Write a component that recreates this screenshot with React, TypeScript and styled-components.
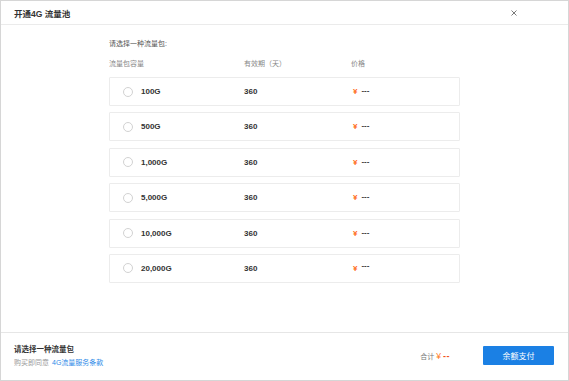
import React from "react";
import styled, { createGlobalStyle } from "styled-components";

const GlobalStyle = createGlobalStyle`
    html, body {
        margin: 0;
        padding: 0;
        background: #ffffff;
    }
    * {
        box-sizing: border-box;
    }
    body {
        font-family: "Liberation Sans", "Noto Sans CJK SC", sans-serif;
        color: #333;
    }
`;

const Dialog = styled.div`
    width: 569px;
    height: 381px;
    border: 1px solid #d6d6d6;
    display: flex;
    flex-direction: column;
    background: #fff;
`;
const Header = styled.div`
    height: 24px;
    flex-shrink: 0;
    display: flex;
    align-items: center;
    justify-content: space-between;
    padding: 0 50px 0 13px;
    border-bottom: 1px solid #ebebeb;
`;
const Title = styled.h1`
    margin: 0;
    font-size: 8.5px;
    font-weight: 700;
    color: #333;
`;
const CloseBtn = styled.button`
    width: 8px;
    height: 8px;
    padding: 0;
    border: none;
    background: transparent;
    display: flex;
    align-items: center;
    justify-content: center;
    cursor: pointer;
`;
const Body = styled.div`
    flex: 1;
    padding: 14px 0 0 108px;
`;
const Content = styled.div`
    width: 351px;
`;
const Hint = styled.div`
    font-size: 7px;
    color: #555;
    line-height: 10px;
    margin-bottom: 10px;
`;
const ColumnHead = styled.div`
    display: grid;
    grid-template-columns: 135px 107px 1fr;
    font-size: 7px;
    color: #888;
    line-height: 10px;
    margin-bottom: 8px;
`;
const List = styled.div`
    display: flex;
    flex-direction: column;
    gap: 6.4px;
`;
const Row = styled.label`
    height: 29px;
    border: 1px solid #ececec;
    border-radius: 1px;
    display: grid;
    grid-template-columns: 134px 107px 1fr;
    align-items: center;
    font-size: 8px;
    font-weight: 700;
    color: #333;
    cursor: pointer;
`;
const Cap = styled.div`
    display: flex;
    align-items: center;
    padding-left: 13px;
    gap: 8px;
`;
const Radio = styled.span<{ $checked?: boolean }>`
    width: 10px;
    height: 10px;
    border-radius: 50%;
    border: 1px solid ${(p) => (p.$checked ? "#1b7fe3" : "#d2d2d2")};
    background: #fff;
    flex-shrink: 0;
`;
const Price = styled.div`
    display: flex;
    align-items: center;
    gap: 4px;
    padding-left: 2px;
`;
const Yen = styled.span`
    color: #ff6a13;
    font-size: 8px;
    font-weight: 700;
`;
const Dash = styled.span<{ $raised?: boolean }>`
    color: #333;
    font-size: 8px;
    font-weight: 700;
    position: relative;
    top: ${(p) => (p.$raised ? "-2.5px" : "-1px")};
`;
const Footer = styled.div`
    height: 48px;
    flex-shrink: 0;
    border-top: 1px solid #e6e6e6;
    display: flex;
    align-items: center;
    justify-content: space-between;
    padding: 0 14px 2px 13px;
`;
const Notice = styled.div`
    display: flex;
    flex-direction: column;
    gap: 3px;
`;
const NoticeTitle = styled.div`
    font-size: 7.5px;
    font-weight: 700;
    color: #333;
    line-height: 11px;
`;
const Agree = styled.div`
    font-size: 7px;
    color: #999;
    line-height: 10px;
`;
const Link = styled.a`
    color: #2d8ae8;
    text-decoration: none;
    margin-left: 3px;
`;
const PayBox = styled.div`
    display: flex;
    align-items: center;
`;
const Total = styled.span`
    font-size: 7px;
    color: #777;
    display: flex;
    align-items: center;
    gap: 2px;
    margin-right: 33px;
`;
const TotalYen = styled.span`
    color: #ff7b1e;
    font-size: 8.5px;
`;
const TotalVal = styled.span`
    color: #f2541b;
    font-size: 9px;
    font-weight: 700;
    letter-spacing: 0.5px;
`;
const PayBtn = styled.button`
    width: 71px;
    height: 19px;
    border: none;
    border-radius: 1px;
    background: #1b80e4;
    color: #fff;
    font-family: inherit;
    font-size: 8px;
    cursor: pointer;
`;

const packs = [
    { size: "100G", days: 360 },
    { size: "500G", days: 360 },
    { size: "1,000G", days: 360 },
    { size: "5,000G", days: 360 },
    { size: "10,000G", days: 360 },
    { size: "20,000G", days: 360, raised: true },
];

export default function App() {
    return (
        <>
            <GlobalStyle />
            <Dialog>
                <Header>
                    <Title>开通4G 流量池</Title>
                    <CloseBtn aria-label="close">
                        <svg width="6" height="6" viewBox="0 0 6 6">
                            <path d="M0.5 0.5L5.5 5.5M5.5 0.5L0.5 5.5" stroke="#7a7a7a" strokeWidth="1" />
                        </svg>
                    </CloseBtn>
                </Header>
                <Body>
                    <Content>
                        <Hint>请选择一种流量包:</Hint>
                        <ColumnHead>
                            <span>流量包容量</span>
                            <span>有效期（天）</span>
                            <span>价格</span>
                        </ColumnHead>
                        <List>
                            {packs.map((p) => (
                                <Row key={p.size}>
                                    <Cap>
                                        <Radio />
                                        <span>{p.size}</span>
                                    </Cap>
                                    <span>{p.days}</span>
                                    <Price>
                                        <Yen>¥</Yen>
                                        <Dash $raised={p.raised}>---</Dash>
                                    </Price>
                                </Row>
                            ))}
                        </List>
                    </Content>
                </Body>
                <Footer>
                    <Notice>
                        <NoticeTitle>请选择一种流量包</NoticeTitle>
                        <Agree>
                            购买即同意
                            <Link href="#">4G流量服务条款</Link>
                        </Agree>
                    </Notice>
                    <PayBox>
                        <Total>
                            合计
                            <TotalYen>¥</TotalYen>
                            <TotalVal>--</TotalVal>
                        </Total>
                        <PayBtn>余额支付</PayBtn>
                    </PayBox>
                </Footer>
            </Dialog>
        </>
    );
}
